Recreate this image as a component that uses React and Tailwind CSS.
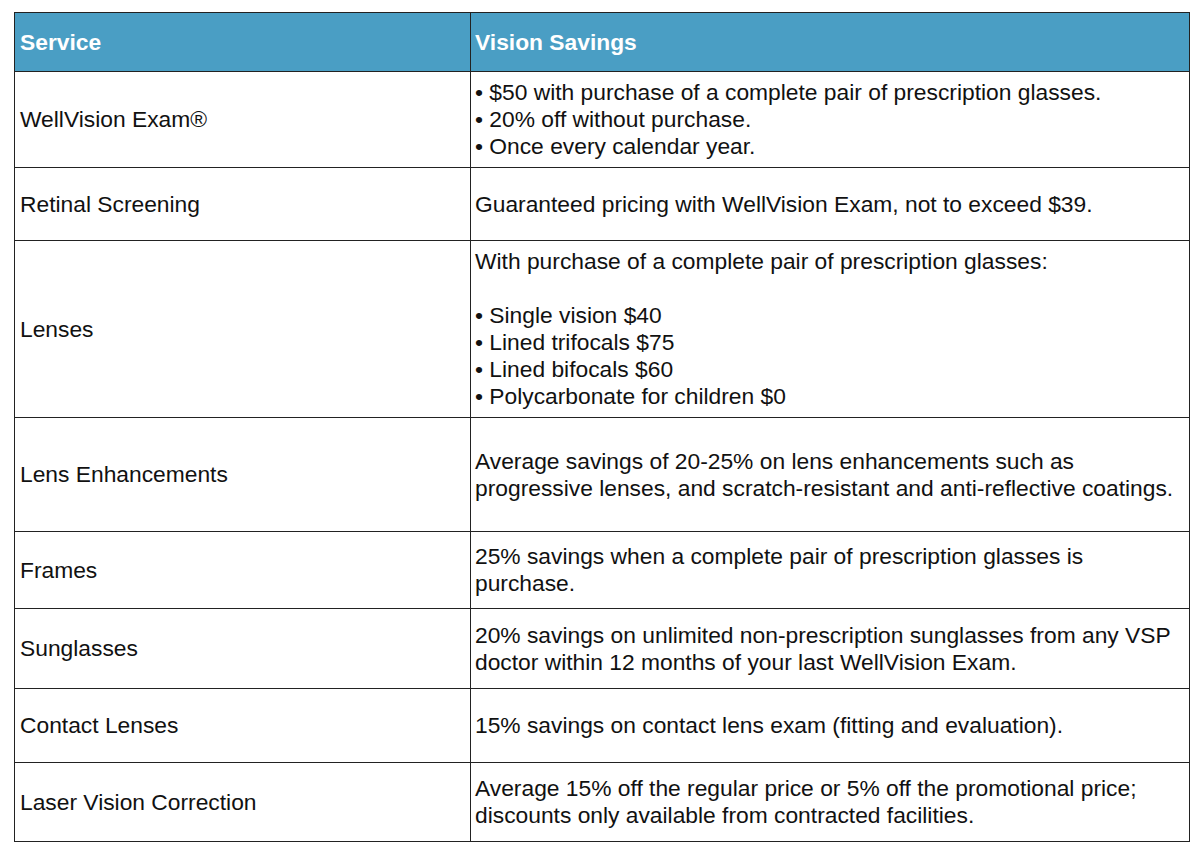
const rows = [
  { service: 'WellVision Exam®', h: 'h-[96px]', lines: ['• $50 with purchase of a complete pair of prescription glasses.', '• 20% off without purchase.', '• Once every calendar year.'] },
  { service: 'Retinal Screening', h: 'h-[73px]', lines: ['Guaranteed pricing with WellVision Exam, not to exceed $39.'] },
  { service: 'Lenses', h: 'h-[177px]', lines: ['With purchase of a complete pair of prescription glasses:', '', '• Single vision $40', '• Lined trifocals $75', '• Lined bifocals $60', '• Polycarbonate for children $0'] },
  { service: 'Lens Enhancements', h: 'h-[114px]', lines: ['Average savings of 20-25% on lens enhancements such as', 'progressive lenses, and scratch-resistant and anti-reflective coatings.'] },
  { service: 'Frames', h: 'h-[77px]', lines: ['25% savings when a complete pair of prescription glasses is', 'purchase.'] },
  { service: 'Sunglasses', h: 'h-[80px]', lines: ['20% savings on unlimited non-prescription sunglasses from any VSP', 'doctor within 12 months of your last WellVision Exam.'] },
  { service: 'Contact Lenses', h: 'h-[74px]', lines: ['15% savings on contact lens exam (fitting and evaluation).'] },
  { service: 'Laser Vision Correction', h: 'h-[79px]', lines: ['Average 15% off the regular price or 5% off the promotional price;', 'discounts only available from contracted facilities.'] },
]

export default function App() {
  return (
    <div className="min-h-[855px] bg-white pl-[14px] pt-[12px] font-['Liberation_Sans',Arial,sans-serif] text-[22.8px] leading-[27px] text-[#111]">
      <table className="w-[1176px] table-fixed border-collapse">
        <thead>
          <tr className="h-[59px] bg-[#4a9ec4]">
            <th className="w-[456px] border border-[#222] px-[5px] text-left font-bold text-white">Service</th>
            <th className="border border-[#222] px-[4px] text-left font-bold text-white">Vision Savings</th>
          </tr>
        </thead>
        <tbody>
          {rows.map((row) => (
            <tr key={row.service} className={row.h}>
              <td className="border border-[#222] px-[5px] align-middle">{row.service}</td>
              <td className="border border-[#222] px-[4px] align-middle">
                {row.lines.map((line, i) => (
                  <div key={i} className="h-[27px] whitespace-nowrap">{line}</div>
                ))}
              </td>
            </tr>
          ))}
        </tbody>
      </table>
    </div>
  )
}
